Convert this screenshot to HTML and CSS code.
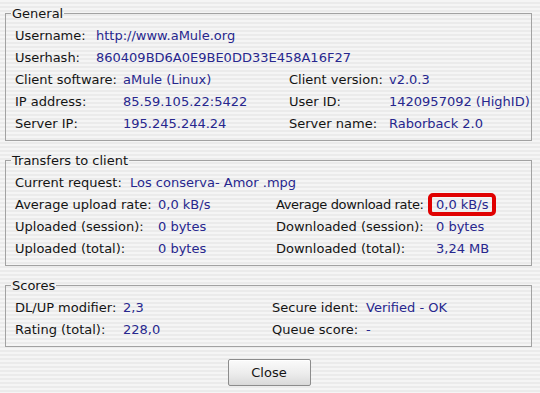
FILE: index.html
```html
<!DOCTYPE html>
<html>
<head>
<meta charset="utf-8">
<link rel="stylesheet" href="styles.css">
</head>
<body>
<div class="dialog">
  <fieldset class="box">
    <legend>General</legend>
    <div class="grid g-user">
      <span class="lbl">Username:</span><span class="val">http://www.aMule.org</span>
      <span class="lbl">Userhash:</span><span class="val">860409BD6A0E9BE0DD33E458A16F27</span>
    </div>
    <div class="grid g-gen">
      <span class="lbl">Client software:</span><span class="val">aMule (Linux)</span>
      <span class="lbl">Client version:</span><span class="val">v2.0.3</span>
      <span class="lbl">IP address:</span><span class="val">85.59.105.22:5422</span>
      <span class="lbl">User ID:</span><span class="val">1420957092 (HighID)</span>
      <span class="lbl">Server IP:</span><span class="val">195.245.244.24</span>
      <span class="lbl">Server name:</span><span class="val">Raborback 2.0</span>
    </div>
  </fieldset>

  <fieldset class="box">
    <legend>Transfers to client</legend>
    <div class="grid g-req">
      <span class="lbl">Current request:</span><span class="val">Los conserva- Amor .mpg</span>
    </div>
    <div class="grid g-xfer">
      <span class="lbl">Average upload rate:</span><span class="val">0,0 kB/s</span>
      <span class="lbl tight">Average download rate:</span><span class="val"><span class="mark">0,0 kB/s</span></span>
      <span class="lbl">Uploaded (session):</span><span class="val">0 bytes</span>
      <span class="lbl">Downloaded (session):</span><span class="val">0 bytes</span>
      <span class="lbl">Uploaded (total):</span><span class="val">0 bytes</span>
      <span class="lbl">Downloaded (total):</span><span class="val">3,24 MB</span>
    </div>
  </fieldset>

  <fieldset class="box">
    <legend>Scores</legend>
    <div class="grid g-score">
      <span class="lbl">DL/UP modifier:</span><span class="val">2,3</span>
      <span class="lbl">Secure ident:</span><span class="val">Verified - OK</span>
      <span class="lbl">Rating (total):</span><span class="val">228,0</span>
      <span class="lbl">Queue score:</span><span class="val">-</span>
    </div>
  </fieldset>

  <div class="actions">
    <button class="btn">Close</button>
  </div>
</div>
</body>
</html>
```

FILE: styles.css
```css
html, body {
  margin: 0;
  padding: 0;
  height: 100%;
}
body {
  font-family: "DejaVu Sans", sans-serif;
  font-size: 13px;
  color: #141414;
  background: repeating-linear-gradient(to bottom, #f5f5f5 0px, #f5f5f5 2px, #ebebeb 2px, #ebebeb 4px);
}
.dialog {
  padding: 6px 8px 0 5px;
  display: flex;
  flex-direction: column;
  gap: 12px;
}
.box {
  margin: 0;
  border: 1px solid #a2a2a2;
  padding: 3px 0 6px 5px;
  min-width: 0;
}
.box legend {
  padding: 0 1px;
  line-height: 15px;
  color: #141414;
}
.grid {
  display: grid;
  margin-left: 4px;
  grid-auto-rows: 22px;
  align-items: center;
  white-space: nowrap;
}
.g-user { grid-template-columns: 81px auto; }
.g-gen { grid-template-columns: 108px 166px 100px auto; }
.g-req { grid-template-columns: 115px auto; }
.g-xfer { grid-template-columns: 143px 118px 160px auto; }
.g-score { grid-template-columns: 108px 149px 94px auto; }
.lbl { color: #141414; }
.tight { letter-spacing: -0.35px; }
.val { color: #27278e; }
.mark {
  position: relative;
}
.mark::after {
  content: "";
  position: absolute;
  left: -8px;
  right: -8px;
  top: -4px;
  bottom: -4px;
  border: 4px solid #e00000;
  border-radius: 5px;
}
.actions {
  display: flex;
  justify-content: center;
}
.btn {
  width: 83px;
  height: 27px;
  margin-left: 1px;
  font-family: "DejaVu Sans", sans-serif;
  font-size: 13px;
  color: #141414;
  border: 1px solid #8c8c8c;
  border-radius: 2px;
  background: linear-gradient(to bottom, #fbfbfb 0%, #ececec 55%, #d9d9d9 100%);
  box-shadow: inset 0 1px 0 #ffffff;
  padding: 0;
}
```
